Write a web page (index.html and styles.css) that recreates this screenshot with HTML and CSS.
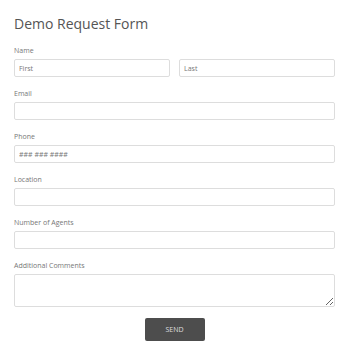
FILE: index.html
```html
<!DOCTYPE html>
<html lang="en">

<head>
    <meta charset="UTF-8">
    <meta name="viewport" content="width=device-width, initial-scale=1.0">
    <title>Demo Request Form</title>
    <link rel="stylesheet" href="styles.css">
</head>

<body>
    <form class="form">
        <h1 class="form-title">Demo Request Form</h1>

        <div class="field">
            <label class="field-label">Name</label>
            <div class="name-row">
                <input class="field-input" type="text" placeholder="First">
                <input class="field-input" type="text" placeholder="Last">
            </div>
        </div>

        <div class="field">
            <label class="field-label">Email</label>
            <input class="field-input" type="email">
        </div>

        <div class="field">
            <label class="field-label">Phone</label>
            <input class="field-input" type="tel" placeholder="### ### ####">
        </div>

        <div class="field">
            <label class="field-label">Location</label>
            <input class="field-input" type="text">
        </div>

        <div class="field">
            <label class="field-label">Number of Agents</label>
            <input class="field-input" type="text">
        </div>

        <div class="field field-last">
            <label class="field-label">Additional Comments</label>
            <textarea class="field-input field-textarea"></textarea>
        </div>

        <div class="footer">
            <button class="send-button" type="button">SEND</button>
        </div>
    </form>
</body>

</html>
```

FILE: styles.css
```css
html,
body {
    margin: 0;
    padding: 0;
    background-color: white;
    font-family: "Open Sans", "Liberation Sans", sans-serif;
}

.form {
    padding: 14px 15px 0 14px;
}

.form-title {
    margin: 0 0 12px 0;
    font-size: 14px;
    line-height: 20px;
    font-weight: normal;
    color: #555;
}

.field {
    margin-bottom: 12px;
}

.field-last {
    margin-bottom: 11px;
}

.field-label {
    display: block;
    margin-bottom: 3px;
    font-size: 7px;
    line-height: 10px;
    color: #777;
}

.name-row {
    display: flex;
    gap: 9px;
}

.field-input {
    display: block;
    box-sizing: border-box;
    width: 100%;
    height: 18px;
    margin: 0;
    padding: 0 4px;
    border: 1px solid #ddd;
    border-radius: 2px;
    font-family: inherit;
    font-size: 7px;
    color: #555;
    background-color: white;
    outline: none;
}

.field-input::placeholder {
    color: #777;
}

.field-textarea {
    height: 33px;
    resize: vertical;
}

.footer {
    display: flex;
    justify-content: center;
}

.send-button {
    width: 60px;
    height: 23px;
    border: none;
    border-radius: 2px;
    background-color: #4d4d4d;
    color: #ddd;
    font-family: inherit;
    font-size: 7px;
}
```
